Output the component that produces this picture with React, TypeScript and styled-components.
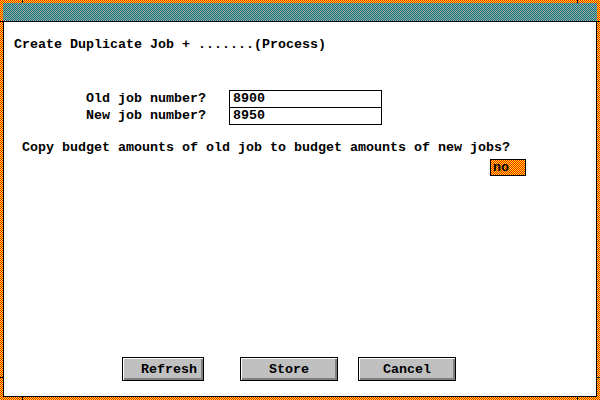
import React from 'react'
import styled, { createGlobalStyle } from 'styled-components'

const GlobalStyle = createGlobalStyle`
  html, body {
    margin: 0;
    padding: 0;
    background: #ffffff;
  }
  body {
    font-family: 'Liberation Mono', 'DejaVu Sans Mono', monospace;
    font-weight: 700;
    font-size: 13.33px;
    color: #000000;
  }
`

// 2x2 dither tile, drawn as a tiny svg so every pixel stays crisp
const checker = (a: string, b: string) => {
  const svg = `<svg xmlns='http://www.w3.org/2000/svg' width='2' height='2' shape-rendering='crispEdges'><rect width='2' height='2' fill='${b}'/><rect width='1' height='1' fill='${a}'/><rect x='1' y='1' width='1' height='1' fill='${a}'/></svg>`
  return `url("data:image/svg+xml,${encodeURIComponent(svg)}") 0 0 / 2px 2px repeat`
}

const Frame = styled.div`
  position: relative;
  width: 600px;
  height: 400px;
  box-sizing: border-box;
  padding: 3px;
  background: ${checker('#ff0000', '#ffff00')};
  image-rendering: pixelated;
  display: flex;
  flex-direction: column;
`

// resize-handle ticks cut into the frame, 22px from each corner
const Notch = styled.span<{ $side: 'top' | 'bottom' | 'left' | 'right'; $at: string }>`
  position: absolute;
  background: #000000;
  ${(p) =>
    p.$side === 'top' || p.$side === 'bottom'
      ? `width: 1px; height: 3px; ${p.$side}: 0; left: ${p.$at};`
      : `width: 3px; height: 1px; ${p.$side}: 0; top: ${p.$at};`}
`

const TitleBar = styled.div`
  height: 18px;
  flex: none;
  background: ${checker('#008080', '#a0a0a0')};
  image-rendering: pixelated;
  border-bottom: 1px solid #000000;
`

const Body = styled.div`
  flex: 1;
  display: flex;
  flex-direction: column;
  background: #ffffff;
  border: 1px solid #000000;
  border-top: none;
  padding: 15px 0 15px 10px;
  line-height: 16px;
`

const Heading = styled.div`
  white-space: pre;
`

const Form = styled.div`
  margin-top: 37px;
  padding-left: 72px;
  display: grid;
  grid-template-columns: 143px 153px;
  align-items: center;
`

const Label = styled.div`
  white-space: pre;
`

const Field = styled.div<{ $last?: boolean }>`
  box-sizing: border-box;
  height: ${(p) => (p.$last ? 18 : 17)}px;
  border: 1px solid #000000;
  border-bottom: ${(p) => (p.$last ? '1px solid #000000' : 'none')};
  padding: 0 3px;
  line-height: 16px;
`

const Question = styled.div`
  margin-top: 15px;
  padding-left: 8px;
  white-space: pre;
`

const Choice = styled.div`
  margin: 3px 0 0 476px;
  width: 36px;
  height: 17px;
  box-sizing: border-box;
  border: 1px solid #000000;
  background: ${checker('#ff0000', '#ffff00')};
  image-rendering: pixelated;
  padding-left: 2px;
  line-height: 15px;
`

const ButtonRow = styled.div`
  margin-top: auto;
  display: flex;
  padding-left: 108px;
`

const Button = styled.button<{ $w: number; $gap: number; $pad?: number }>`
  width: ${(p) => p.$w}px;
  height: 24px;
  margin-left: ${(p) => p.$gap}px;
  box-sizing: border-box;
  border: 1px solid #000000;
  background: #c0c0c0;
  box-shadow: inset 1px 1px 0 #ffffff, inset -2px -2px 0 #808080;
  font-family: inherit;
  font-weight: 700;
  font-size: 13.33px;
  color: #000000;
  padding: 0 0 0 ${(p) => p.$pad ?? 0}px;
`

export default function App() {
  return (
    <>
      <GlobalStyle />
      <Frame>
        <Notch $side="top" $at="22px" />
        <Notch $side="top" $at="577px" />
        <Notch $side="bottom" $at="22px" />
        <Notch $side="bottom" $at="577px" />
        <Notch $side="left" $at="21px" />
        <Notch $side="left" $at="377px" />
        <Notch $side="right" $at="21px" />
        <Notch $side="right" $at="377px" />
        <TitleBar />
        <Body>
          <Heading>Create Duplicate Job + .......(Process)</Heading>
          <Form>
            <Label>Old job number?</Label>
            <Field>8900</Field>
            <Label>New job number?</Label>
            <Field $last>8950</Field>
          </Form>
          <Question>Copy budget amounts of old job to budget amounts of new jobs?</Question>
          <Choice>no</Choice>
          <ButtonRow>
            <Button $w={82} $gap={0} $pad={12}>Refresh</Button>
            <Button $w={98} $gap={36} $pad={-4}>Store</Button>
            <Button $w={98} $gap={20} $pad={-4}>Cancel</Button>
          </ButtonRow>
        </Body>
      </Frame>
    </>
  )
}
